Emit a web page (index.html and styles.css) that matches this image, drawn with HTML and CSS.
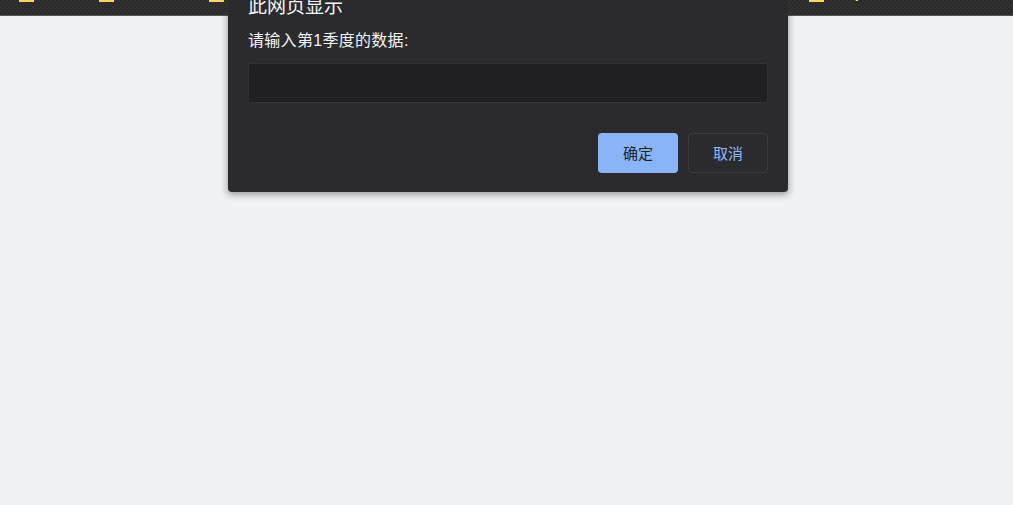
FILE: index.html
```html
<!DOCTYPE html>
<html>

	<head>
		<meta charset="UTF-8">
		<title>此网页显示</title>
		<link rel="stylesheet" href="styles.css">
	</head>

	<body>
		<div class="bar">
			<i class="folder"></i>
			<i class="folder f2"></i>
			<i class="folder f3"></i>
			<i class="folder f4"></i>
			<i class="dot"></i>
		</div>
		<div class="dialog">
			<h1 class="title">此网页显示</h1>
			<p class="msg">请输入第1季度的数据:</p>
			<input type="text" class="ipt" />
			<div class="btns">
				<button class="btn ok">确定</button>
				<button class="btn cancel">取消</button>
			</div>
		</div>
	</body>

</html>
```

FILE: styles.css
```css
html,
body {
	height: 100%;
}

body {
	margin: 0;
	overflow: hidden;
	background: #f0f1f3;
	font-family: "Liberation Sans", "Noto Sans CJK SC", sans-serif;
}

.bar {
	display: flex;
	height: 15px;
	padding-left: 19px;
	background: #2a2a2b repeating-conic-gradient(rgba(255, 255, 255, .03) 0 25%, transparent 0 50%) 0 0 / 4px 4px;
	border-bottom: 1px solid #555;
}

.folder {
	width: 15px;
	height: 2px;
	background: #fdd663;
}

.f2 {
	margin-left: 65px;
}

.f3 {
	margin-left: 95px;
}

.f4 {
	margin-left: 585px;
}

.dot {
	width: 3px;
	height: 1px;
	margin-left: 31px;
	background: linear-gradient(90deg, #3b5fd0 50%, #fdd663 50%);
}

.dialog {
	position: absolute;
	top: -20px;
	left: 228px;
	box-sizing: border-box;
	width: 560px;
	height: 212px;
	padding: 20px;
	background: #29292b repeating-conic-gradient(rgba(255, 255, 255, .02) 0 25%, transparent 0 50%) 0 0 / 4px 4px;
	border-radius: 0 0 4px 4px;
	box-shadow: 0 2px 6px 1px rgba(60, 64, 67, .45);
	color: #f4f5f6;
}

.title {
	margin: 0;
	font-size: 19px;
	font-weight: normal;
	line-height: 14px;
}

.msg {
	margin: 15px 0 0;
	font-size: 16px;
	line-height: 24px;
	letter-spacing: .3px;
}

.ipt {
	display: block;
	box-sizing: border-box;
	width: 520px;
	height: 40px;
	margin-top: 10px;
	background: #202022;
	border: 1px solid #313133;
	border-radius: 3px;
	outline: none;
}

.btns {
	display: flex;
	justify-content: flex-end;
	gap: 10px;
	margin-top: 30px;
}

.btn {
	width: 80px;
	height: 40px;
	padding: 0 0 2px;
	border-radius: 4px;
	font-family: inherit;
	font-size: 15px;
}

.ok {
	background: #8ab4f8;
	border: none;
	color: #202124;
}

.cancel {
	background: transparent;
	border: 1px solid #3c3c3f;
	color: #8fb8ff;
}
```
